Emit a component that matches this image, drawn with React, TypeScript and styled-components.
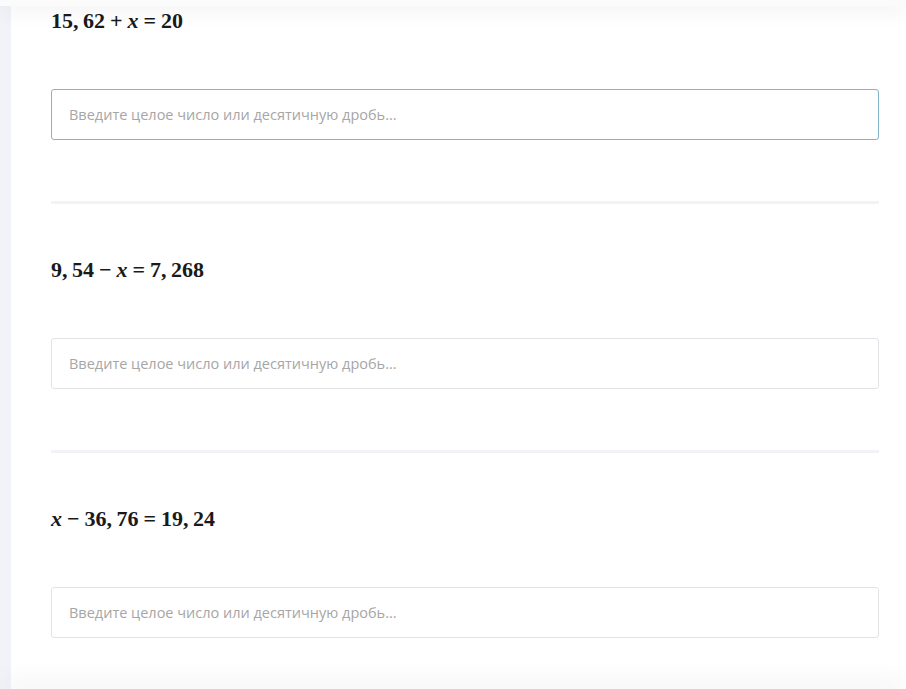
import React from 'react';
import styled, { createGlobalStyle } from 'styled-components';

const GlobalStyle = createGlobalStyle`
  html, body {
    margin: 0;
    padding: 0;
    background: #ffffff;
  }
  body {
    font-family: "Open Sans", "Noto Sans", sans-serif;
  }
`;

const Page = styled.div`
  display: flex;
  min-height: 689px;
  background: #ffffff;
`;

const SideStrip = styled.div`
  width: 11px;
  flex-shrink: 0;
  background: #f1f3f9;
`;

const Content = styled.main`
  flex: 1;
  padding: 7px 27px 0 40px;
`;

const TopShade = styled.div`
  position: fixed;
  top: 0;
  left: 0;
  right: 0;
  height: 6px;
  background: #fbfbfb;
  box-shadow: 0 3px 20px rgba(0, 0, 0, 0.12);
  z-index: 2;
`;

const BottomShade = styled.div`
  position: fixed;
  left: 0;
  right: 0;
  bottom: -10px;
  height: 10px;
  background: #f2f2f4;
  box-shadow: 0 -6px 26px rgba(0, 0, 0, 0.08);
  z-index: 2;
`;

const Task = styled.section`
  display: flex;
  flex-direction: column;
`;

const Equation = styled.div`
  font-family: "Liberation Serif", "Times New Roman", serif;
  font-weight: 700;
  font-size: 22px;
  line-height: 28px;
  height: 28px;
  color: #1a1a1a;
  white-space: nowrap;
`;

const Var = styled.span`
  font-style: italic;
`;

const Op = styled.span`
  margin: 0 5px;
`;

const Answer = styled.input<{ $focused?: boolean }>`
  margin-top: 54px;
  height: 51px;
  box-sizing: border-box;
  width: 100%;
  padding: 0 17px;
  border: 1px solid ${({ $focused }) => ($focused ? '#84b3ca' : '#e1e3e6')};
  border-radius: 3px;
  background: #ffffff;
  font-family: "Open Sans", "Noto Sans", sans-serif;
  font-size: 14.5px;
  color: #333;
  outline: none;
  &::placeholder {
    color: #a6a6a6;
  }
`;

const Divider = styled.hr`
  margin: 61px 0 52px;
  border: none;
  height: 3px;
  background: #f1f3f7;
`;

const placeholder = 'Введите целое число или десятичную дробь...';

const tasks: { parts: React.ReactNode; focused?: boolean }[] = [
  {
    parts: (
      <>
        15,&thinsp;62<Op>+</Op><Var>x</Var><Op>=</Op>20
      </>
    ),
    focused: true,
  },
  {
    parts: (
      <>
        9,&thinsp;54<Op>−</Op><Var>x</Var><Op>=</Op>7,&thinsp;268
      </>
    ),
  },
  {
    parts: (
      <>
        <Var>x</Var><Op>−</Op>36,&thinsp;76<Op>=</Op>19,&thinsp;24
      </>
    ),
  },
];

const App = () => {
  return (
    <>
      <GlobalStyle />
      <TopShade />
      <Page>
        <SideStrip />
        <Content>
          {tasks.map((task, i) => (
            <Task key={i}>
              <Equation>{task.parts}</Equation>
              <Answer type="text" placeholder={placeholder} $focused={task.focused} />
              {i < tasks.length - 1 && <Divider />}
            </Task>
          ))}
        </Content>
      </Page>
      <BottomShade />
    </>
  );
};

export default App;
